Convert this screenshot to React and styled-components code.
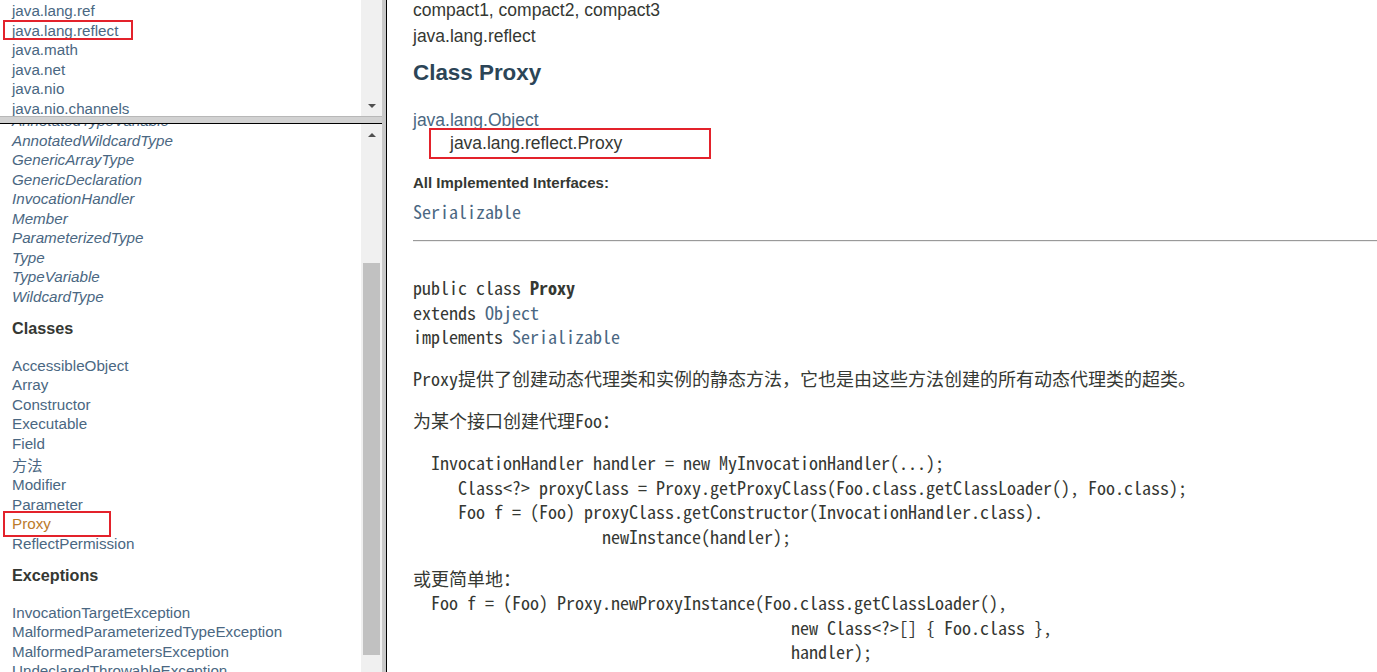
import styled, { createGlobalStyle } from "styled-components";

const GlobalStyle = createGlobalStyle`
  html, body {
    margin: 0;
    padding: 0;
    background: #ffffff;
  }
  body {
    font-family: "Liberation Sans", Arial, "Noto Sans CJK SC", sans-serif;
    overflow: hidden;
  }
`;

const packages = [
  "java.lang.ref",
  "java.lang.reflect",
  "java.math",
  "java.net",
  "java.nio",
  "java.nio.channels",
];

const interfaces = [
  "AnnotatedTypeVariable",
  "AnnotatedWildcardType",
  "GenericArrayType",
  "GenericDeclaration",
  "InvocationHandler",
  "Member",
  "ParameterizedType",
  "Type",
  "TypeVariable",
  "WildcardType",
];

const classes = [
  "AccessibleObject",
  "Array",
  "Constructor",
  "Executable",
  "Field",
  "方法",
  "Modifier",
  "Parameter",
  "Proxy",
  "ReflectPermission",
];

const exceptions = [
  "InvocationTargetException",
  "MalformedParameterizedTypeException",
  "MalformedParametersException",
  "UndeclaredThrowableException",
];

const codeOne = [
  "  InvocationHandler handler = new MyInvocationHandler(...);",
  "     Class<?> proxyClass = Proxy.getProxyClass(Foo.class.getClassLoader(), Foo.class);",
  "     Foo f = (Foo) proxyClass.getConstructor(InvocationHandler.class).",
  "                     newInstance(handler);",
].join("\n");

const codeTwo = [
  "  Foo f = (Foo) Proxy.newProxyInstance(Foo.class.getClassLoader(),",
  "                                          new Class<?>[] { Foo.class },",
  "                                          handler);",
].join("\n");

const ArrowIcon = ({ up }) => (
  <svg width="8" height="4" viewBox="0 0 8 4">
    <polygon points={up ? "0,4 8,4 4,0" : "0,0 8,0 4,4"} fill="#505050" />
  </svg>
);

const App = () => {
  return (
    <>
      <GlobalStyle />
      <Page>
        <LeftColumn>
          <Frame $height={116}>
            <FrameBody>
              <Scrolled $offset={1}>
                <NavList>
                  {packages.map((name) => (
                    <NavItem key={name}>
                      {name}
                      {name === "java.lang.reflect" && (
                        <Callout $left={-9} $top={-0.5} $w={130} $h={20} />
                      )}
                    </NavItem>
                  ))}
                </NavList>
              </Scrolled>
            </FrameBody>
            <Track $end>
              <ArrowButton>
                <ArrowIcon />
              </ArrowButton>
            </Track>
          </Frame>
          <HSplitter />
          <Frame $grow>
            <FrameBody>
              <Scrolled $offset={-12.75}>
                <NavList>
                  {interfaces.map((name) => (
                    <NavItem key={name} $italic>
                      {name}
                    </NavItem>
                  ))}
                </NavList>
                <GroupTitle>Classes</GroupTitle>
                <NavList>
                  {classes.map((name) => (
                    <NavItem
                      key={name}
                      $current={name === "Proxy"}
                      $cjk={name === "方法"}
                    >
                      {name}
                      {name === "Proxy" && (
                        <Callout $left={-9} $top={-3.25} $w={108} $h={26} />
                      )}
                    </NavItem>
                  ))}
                </NavList>
                <GroupTitle>Exceptions</GroupTitle>
                <NavList>
                  {exceptions.map((name) => (
                    <NavItem key={name}>{name}</NavItem>
                  ))}
                </NavList>
              </Scrolled>
            </FrameBody>
            <Track>
              <ArrowButton>
                <ArrowIcon up />
              </ArrowButton>
              <Thumb style={{ marginTop: 118, height: 392 }} />
            </Track>
          </Frame>
        </LeftColumn>
        <VSplitter />
        <MainFrame>
          <Content>
            <HeaderLine>compact1, compact2, compact3</HeaderLine>
            <HeaderLine>java.lang.reflect</HeaderLine>
            <Title>Class Proxy</Title>
            <Inheritance>
              <InheritLink>java.lang.Object</InheritLink>
              <InheritSelf>
                java.lang.reflect.Proxy
                <Callout $left={16} $top={-3.5} $w={282} $h={31} />
              </InheritSelf>
            </Inheritance>
            <InterfacesLabel>All Implemented Interfaces:</InterfacesLabel>
            <InterfacesValue>Serializable</InterfacesValue>
            <Rule />
            <Signature>
              public class <b>Proxy</b>
              {"\n"}extends <CodeLink>Object</CodeLink>
              {"\n"}implements <CodeLink>Serializable</CodeLink>
            </Signature>
            <Para>
              Proxy提供了创建动态代理类和实例的静态方法，它也是由这些方法创建的所有动态代理类的超类。
            </Para>
            <Para>为某个接口创建代理Foo：</Para>
            <Code>{codeOne}</Code>
            <Para>或更简单地：</Para>
            <Code $tight>{codeTwo}</Code>
          </Content>
        </MainFrame>
      </Page>
    </>
  );
};

export default App;

const Page = styled.div`
  display: flex;
  height: 672px;
  overflow: hidden;
`;

const LeftColumn = styled.div`
  display: flex;
  flex-direction: column;
  width: 382px;
  flex-shrink: 0;
`;

const Frame = styled.div`
  display: flex;
  overflow: hidden;
  height: ${(p) => (p.$height ? `${p.$height}px` : "auto")};
  flex: ${(p) => (p.$grow ? "1" : "none")};
  min-height: 0;
`;

const FrameBody = styled.div`
  flex: 1;
  overflow: hidden;
`;

const Scrolled = styled.div`
  margin-top: ${(p) => p.$offset}px;
`;

const Track = styled.div`
  width: 21px;
  flex: none;
  background: #f0f0f0;
  display: flex;
  flex-direction: column;
  justify-content: ${(p) => (p.$end ? "flex-end" : "flex-start")};
  align-items: center;
`;

const ArrowButton = styled.div`
  height: 21px;
  width: 21px;
  flex: none;
  display: flex;
  align-items: center;
  justify-content: center;
`;

const Thumb = styled.div`
  width: 17px;
  flex: none;
  background: #c1c1c1;
`;

const HSplitter = styled.div`
  height: 6px;
  flex: none;
  background: #d2d2d2;
  border-top: 1px solid #b8b8b8;
  border-bottom: 1px solid #000000;
`;

const VSplitter = styled.div`
  width: 4px;
  flex: none;
  background: #c8c8c8;
  border-right: 1px solid #000000;
`;

const NavList = styled.ul`
  list-style: none;
  margin: 0;
  padding: 0 0 0 12px;
`;

const NavItem = styled.li`
  position: relative;
  font-size: 15.2px;
  line-height: ${(p) => (p.$cjk ? "22px" : "19.5px")};
  white-space: nowrap;
  font-style: ${(p) => (p.$italic ? "italic" : "normal")};
  color: ${(p) => (p.$current ? "#bb7a2a" : "#4a6782")};
  font-family: ${(p) =>
    p.$cjk
      ? '"Noto Sans CJK SC", sans-serif'
      : '"Liberation Sans", Arial, sans-serif'};
`;

const Callout = styled.span`
  position: absolute;
  left: ${(p) => p.$left}px;
  top: ${(p) => p.$top}px;
  width: ${(p) => p.$w}px;
  height: ${(p) => p.$h}px;
  box-sizing: border-box;
  border: 2px solid #e3222b;
  pointer-events: none;
`;

const GroupTitle = styled.h2`
  margin: 12px 0 17.5px;
  padding-left: 12px;
  font-size: 16.2px;
  line-height: 20px;
  font-weight: bold;
  color: #353833;
`;

const MainFrame = styled.div`
  flex: 1;
  overflow: hidden;
  color: #353833;
`;

const Content = styled.div`
  margin-top: -3.5px;
  padding-left: 26px;
`;

const HeaderLine = styled.div`
  font-size: 17.5px;
  line-height: 26px;
  white-space: nowrap;
`;

const Title = styled.h2`
  margin: 10.5px 0 0;
  font-size: 22.4px;
  line-height: 28px;
  font-weight: bold;
  color: #2c4557;
`;

const Inheritance = styled.div`
  margin-top: 21.5px;
  font-size: 17.5px;
  line-height: 23px;
`;

const InheritLink = styled.div`
  color: #4a6782;
`;

const InheritSelf = styled.div`
  position: relative;
  padding-left: 37px;
`;

const InterfacesLabel = styled.div`
  margin-top: 18.5px;
  font-size: 15px;
  line-height: 20px;
  font-weight: bold;
`;

const mono = `"Noto Sans Mono CJK SC", "Liberation Mono", monospace`;

const InterfacesValue = styled.div`
  margin-top: 7.5px;
  font-family: ${mono};
  font-size: 18px;
  line-height: 20px;
  color: #4a6782;
`;

const Rule = styled.hr`
  margin: 19px 0 0;
  border: none;
  border-top: 1px solid #9a9a9a;
  border-bottom: 1px solid #eeeeee;
`;

const Signature = styled.pre`
  margin: 33.75px 0 0;
  font-family: ${mono};
  font-size: 18px;
  line-height: 24.5px;
  color: #353833;
`;

const CodeLink = styled.span`
  color: #4a6782;
`;

const Para = styled.p`
  margin: 17.5px 0 0;
  font-family: ${mono};
  font-size: 18px;
  line-height: 24.5px;
  white-space: nowrap;
`;

const Code = styled.pre`
  margin: ${(p) => (p.$tight ? "0" : "17.5px")} 0 0;
  font-family: ${mono};
  font-size: 18px;
  line-height: 24.5px;
  color: #353833;
`;
